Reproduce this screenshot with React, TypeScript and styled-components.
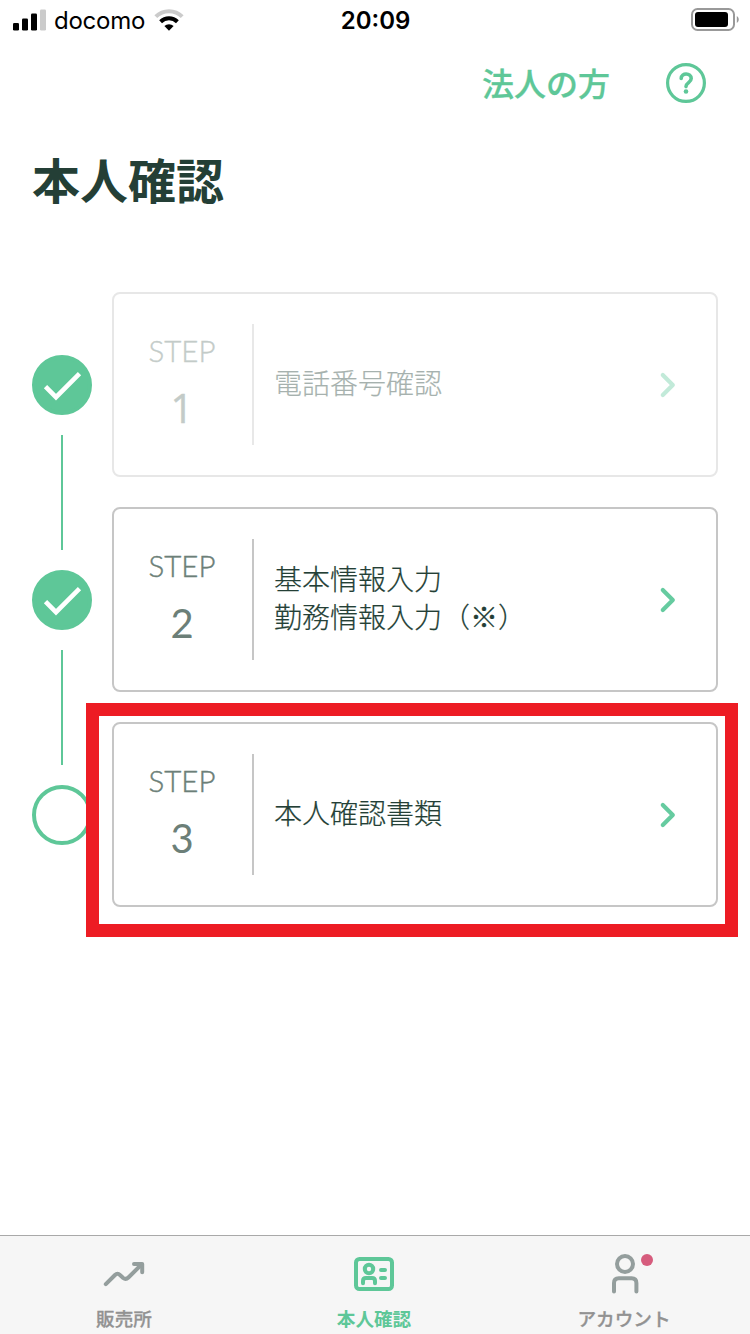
import React from "react";
import styled, { createGlobalStyle } from "styled-components";

const GREEN = "#5ec798";
const GRAY = "#949e9d";
const JP = '"Noto Sans CJK JP", sans-serif';

const GlobalStyle = createGlobalStyle`
  *, *::before, *::after { box-sizing: border-box; }
  body { margin: 0; background: #fff; font-family: ${JP}; overflow: hidden; }
  svg { display: block; flex: none; overflow: visible; }
`;

const Screen = styled.div`
  width: 750px;
  height: 1334px;
  display: flex;
  flex-direction: column;
  background: #fff;
`;

const StatusBar = styled.header`
  height: 40px;
  flex: none;
  display: grid;
  grid-template-columns: 1fr auto 1fr;
  align-items: center;
  padding: 0 11px 0 13px;
  font-family: Inter, sans-serif;
  color: #000;
`;

const StatusGroup = styled.div`
  display: flex;
  align-items: center;
`;

const Carrier = styled.span`
  margin: 2px 9px 0 8px;
  font-size: 24px;
  line-height: 28px;
  letter-spacing: -0.25px;
`;

const Clock = styled.time`
  margin: 2px 1px 0 0;
  font-size: 24px;
  line-height: 28px;
  font-weight: 600;
`;

const BatterySlot = styled.div`
  justify-self: end;
`;

const Actions = styled.nav`
  height: 86px;
  flex: none;
  display: flex;
  align-items: center;
  justify-content: flex-end;
  gap: 56px;
  padding-right: 44px;
`;

const CorporateLink = styled.a`
  color: ${GREEN};
  margin-bottom: 2px;
  font-size: 32px;
  line-height: 40px;
  font-weight: 500;
  -webkit-text-stroke: 0.3px ${GREEN};
`;

const Title = styled.h1`
  margin: 19px 0 0 32px;
  height: 74px;
  font-size: 48px;
  line-height: 66px;
  font-weight: 700;
  color: #243f36;
`;

const Steps = styled.ol`
  list-style: none;
  margin: 0;
  padding: 73px 32px 0;
  flex: 1;
  display: flex;
  flex-direction: column;
  gap: 30px;
`;

const StepRow = styled.li`
  position: relative;
  height: 185px;
  display: flex;
  gap: 20px;
`;

const Track = styled.div`
  width: 60px;
  height: 258px;
  padding-top: 63px;
  flex: none;
  display: flex;
  flex-direction: column;
  align-items: center;
  gap: 20px;
`;

const Marker = styled.div<{ $done: boolean }>`
  width: 60px;
  height: 60px;
  flex: none;
  border-radius: 50%;
  border: 4px solid ${GREEN};
  background: ${(p) => (p.$done ? GREEN : "#fff")};
  display: flex;
  align-items: center;
  justify-content: center;
`;

const Connector = styled.div`
  width: 2px;
  height: 115px;
  flex: none;
  background: ${GREEN};
`;

const Card = styled.div<{ $muted: boolean }>`
  width: 606px;
  flex: none;
  display: flex;
  align-items: center;
  padding-right: 40px;
  border: 2px solid ${(p) => (p.$muted ? "#e7e7e7" : "#c6c6c6")};
  border-radius: 8px;

  > * { opacity: ${(p) => (p.$muted ? 0.4 : 1)}; }
`;

const StepNumber = styled.div`
  width: 140px;
  height: 121px;
  padding: 6px 2px 0 0;
  border-right: 2px solid #c6c6c6;
  display: flex;
  flex-direction: column;
  align-items: center;
  font-family: Lato, sans-serif;
  color: #6c7f78;
`;

const StepWord = styled.span`
  font-size: 29.5px;
  line-height: 42px;
  font-weight: 300;
  -webkit-text-stroke: 0.4px #6c7f78;
`;

const StepDigit = styled.span<{ $footless: boolean }>`
  margin-top: 11px;
  font-family: ${(p) => (p.$footless ? '"Open Sans"' : "Lato")}, sans-serif;
  font-size: 40px;
  line-height: 50px;
  -webkit-text-stroke: ${(p) => (p.$footless ? 0.5 : 0)}px #6c7f78;
`;

const StepLabel = styled.div`
  flex: 1;
  padding: 0 0 5px 20px;
  font-size: 28px;
  line-height: 38px;
  font-weight: 300;
  -webkit-text-stroke: 0.2px #243f36;
  color: #243f36;
  white-space: pre-line;
`;

const Highlight = styled.div`
  position: absolute;
  left: 54px;
  top: -19px;
  width: 652px;
  height: 234px;
  border: 13px solid #ed1c24;
`;

const TabBar = styled.nav`
  height: 99px;
  flex: none;
  display: grid;
  grid-template-columns: repeat(3, 1fr);
  background: #f6f6f6;
  border-top: 1px solid #a9a9a9;
`;

const Tab = styled.a<{ $active?: boolean }>`
  padding: 14px 2px 0 0;
  display: flex;
  flex-direction: column;
  align-items: center;
  gap: 7px;
  color: ${(p) => (p.$active ? GREEN : "#929292")};
  font-size: 18.6px;
  line-height: 26px;
  font-weight: ${(p) => (p.$active ? 700 : 500)};
  -webkit-text-stroke: ${(p) => (p.$active ? 0 : 0.3)}px currentColor;
`;

const SignalIcon = () => (
  <svg width="33" height="22" viewBox="0 0 33 22">
    <rect x="0" y="14" width="6" height="7.5" rx="1.3" />
    <rect x="9" y="9.5" width="6" height="12" rx="1.3" />
    <rect x="18" y="4.5" width="6" height="17" rx="1.3" />
    <rect x="27" y="0.5" width="6" height="21" rx="1.3" fill="#cbcbcb" />
  </svg>
);

const WifiIcon = () => (
  <svg width="30" height="22" viewBox="0 0 30 22">
    <path d="M1.8 7.7A18.5 18.5 0 0 1 28.2 7.7" fill="none" stroke="#cbcbcb" strokeWidth="4" />
    <path d="M6.6 12.8A12 12 0 0 1 23.4 12.8" fill="none" stroke="#000" strokeWidth="4" />
    <path d="M10.4 17.1A6.6 6.6 0 0 1 19.6 17.1L15 21.8Z" />
  </svg>
);

const BatteryIcon = () => (
  <svg width="48" height="24" viewBox="0 0 48 24">
    <rect x="1" y="1" width="42" height="21" rx="5.5" fill="none" stroke="#999" strokeWidth="2" />
    <rect x="4" y="4" width="33" height="15" rx="3" />
    <path d="M45.8 8C48.4 9.5 48.4 13.5 45.8 15Z" fill="#999" />
  </svg>
);

const HelpIcon = () => (
  <svg width="40" height="40" viewBox="0 0 40 40" fill="none" stroke={GREEN}>
    <circle cx="20" cy="20" r="18.4" strokeWidth="3.2" />
    <path
      d="M15.2 15.4C15.2 9.6 25.2 9.6 25.2 15.6C25.2 19.6 20 19.6 20 23.6"
      strokeWidth="3.6"
      strokeLinecap="round"
      strokeLinejoin="round"
    />
    <circle cx="20" cy="28.5" r="2.3" fill={GREEN} stroke="none" />
  </svg>
);

const CheckIcon = () => (
  <svg width="52" height="52" viewBox="0 0 52 52">
    <path d="M9.5 27.6L20 38.2L43.5 14.6" fill="none" stroke="#fff" strokeWidth="4.6" />
  </svg>
);

const ChevronIcon = () => (
  <svg width="18" height="26" viewBox="0 0 18 26">
    <path
      d="M4.8 3L14.8 13L4.8 23"
      fill="none"
      stroke="#66cba0"
      strokeWidth="4.2"
      strokeLinecap="round"
      strokeLinejoin="round"
    />
  </svg>
);

const TrendIcon = () => (
  <svg width="48" height="48" viewBox="0 0 48 48" fill="none" stroke={GRAY} strokeLinecap="round" strokeLinejoin="round">
    <path
      d="M5.8 34.2L15 25Q17.5 22.5 20 25L23.2 28Q25.8 30 28.4 27.5L41 15"
      strokeWidth="4"
    />
    <path d="M34 14H42.2V22.2" strokeWidth="4" />
  </svg>
);

const IdCardIcon = () => (
  <svg width="48" height="48" viewBox="0 0 48 48" fill="none" stroke={GREEN} strokeWidth="4" strokeLinecap="round">
    <rect x="6" y="9" width="36" height="30" rx="3.5" />
    <circle cx="19" cy="19" r="4.2" />
    <path d="M13 33.2V31Q13 28 16 28H22Q25 28 25 31V33.2" strokeLinejoin="round" />
    <path d="M31 20H35M31 28H35" />
  </svg>
);

const AccountIcon = () => (
  <svg width="48" height="48" viewBox="0 0 48 48" fill="none" stroke={GRAY} strokeWidth="4" strokeLinecap="round">
    <circle cx="25" cy="14" r="8" />
    <path d="M14 41.5V33Q14 28.2 18.8 28.2H31.6Q36.4 28.2 36.4 33V41.5" />
    <circle cx="47" cy="10" r="6" fill="#d65c7d" stroke="none" />
  </svg>
);

const STEPS = [
  { label: "電話番号確認", done: true, muted: true, highlighted: false },
  { label: "基本情報入力\n勤務情報入力（※）", done: true, muted: false, highlighted: false },
  { label: "本人確認書類", done: false, muted: false, highlighted: true },
];

export default function App() {
  return (
    <>
      <GlobalStyle />
      <Screen>
        <StatusBar>
          <StatusGroup>
            <SignalIcon />
            <Carrier>docomo</Carrier>
            <WifiIcon />
          </StatusGroup>
          <Clock>20:09</Clock>
          <BatterySlot>
            <BatteryIcon />
          </BatterySlot>
        </StatusBar>
        <Actions>
          <CorporateLink>法人の方</CorporateLink>
          <HelpIcon />
        </Actions>
        <Title>本人確認</Title>
        <Steps>
          {STEPS.map((step, i) => (
            <StepRow key={step.label}>
              <Track>
                <Marker $done={step.done}>{step.done && <CheckIcon />}</Marker>
                {i < STEPS.length - 1 && <Connector />}
              </Track>
              <Card $muted={step.muted}>
                <StepNumber>
                  <StepWord>STEP</StepWord>
                  <StepDigit $footless={i === 0}>{i + 1}</StepDigit>
                </StepNumber>
                <StepLabel>{step.label}</StepLabel>
                <ChevronIcon />
              </Card>
              {step.highlighted && <Highlight />}
            </StepRow>
          ))}
        </Steps>
        <TabBar>
          <Tab>
            <TrendIcon />
            販売所
          </Tab>
          <Tab $active>
            <IdCardIcon />
            本人確認
          </Tab>
          <Tab>
            <AccountIcon />
            アカウント
          </Tab>
        </TabBar>
      </Screen>
    </>
  );
}
